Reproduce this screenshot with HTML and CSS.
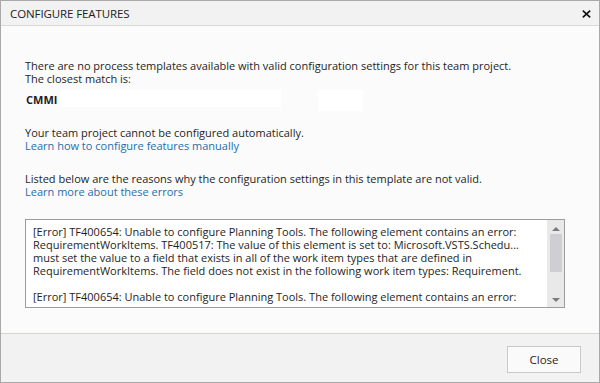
FILE: index.html
```html
<!DOCTYPE html>
<html>
<head>
<meta charset="utf-8">
<link rel="stylesheet" href="styles.css">
</head>
<body>
<div class="dialog">
  <div class="titlebar">
    <span class="title">CONFIGURE FEATURES</span>
    <svg class="close-x" width="9" height="8" viewBox="0 0 9 8"><path d="M0.8 0.6 L8.2 7.4 M8.2 0.6 L0.8 7.4" stroke="#111" stroke-width="1.6" fill="none"/></svg>
  </div>
  <div class="content">
    <p class="para">There are no process templates available with valid configuration settings for this team project.<br>The closest match is:</p>
    <div class="match"><span class="match-name">CMMI</span><span class="blank blank-a"></span><span class="blank blank-b"></span></div>
    <p class="para">Your team project cannot be configured automatically.<br><a class="link">Learn how to configure features manually</a></p>
    <p class="para">Listed below are the reasons why the configuration settings in this template are not valid.<br><a class="link">Learn more about these errors</a></p>
    <div class="errors">
      <div class="errors-text">
        <div class="line">[Error] TF400654: Unable to configure Planning Tools. The following element contains an error:</div>
        <div class="line">RequirementWorkItems. TF400517: The value of this element is set to: Microsoft.VSTS.Schedu...</div>
        <div class="line">must set the value to a field that exists in all of the work item types that are defined in</div>
        <div class="line">RequirementWorkItems. The field does not exist in the following work item types: Requirement.</div>
        <div class="line">&nbsp;</div>
        <div class="line">[Error] TF400654: Unable to configure Planning Tools. The following element contains an error:</div>
      </div>
      <div class="scrollbar">
        <div class="arrow arrow-up"></div>
        <div class="track"><div class="thumb"></div></div>
        <div class="arrow arrow-down"></div>
      </div>
    </div>
  </div>
  <div class="footer">
    <button class="btn">Close</button>
  </div>
</div>
</body>
</html>
```
FILE: styles.css
```css
html, body {
  margin: 0;
  padding: 0;
  background: #ffffff;
}
.dialog {
  width: 600px;
  height: 383px;
  box-sizing: border-box;
  border: 1px solid #a9a9a9;
  display: flex;
  flex-direction: column;
  font-family: "Open Sans", "Noto Sans", sans-serif;
  font-size: 11px;
  color: #1e1e1e;
  background: #fbfbfb;
}
.titlebar {
  height: 24px;
  flex: none;
  background: #f2f2f2;
  border-bottom: 1px solid #d9d9d9;
  display: flex;
  align-items: center;
  justify-content: space-between;
  padding: 0 8px 0 9px;
}
.title {
  font-size: 11.5px;
  color: #222;
  letter-spacing: -0.1px;
}
.close-x {
  display: block;
  margin-top: 1px;
}
.content {
  flex: 1;
  padding: 33px 34px 0 24px;
  display: flex;
  flex-direction: column;
}
.para {
  margin: 0;
  line-height: 13px;
  white-space: nowrap;
}
.para + .para {
  margin-top: 20px;
}
.match {
  display: flex;
  align-items: flex-start;
  margin-top: 8px;
  height: 20px;
  margin-bottom: 0;
}
.match-name {
  font-weight: 700;
  line-height: 13px;
  margin-top: 0;
  padding-left: 1px;
}
.blank {
  background: #ffffff;
  display: block;
}
.blank-a {
  width: 221px;
  height: 17px;
  margin-left: 3px;
  margin-top: -3px;
}
.blank-b {
  width: 45px;
  height: 21px;
  margin-left: 37px;
  margin-top: -3px;
}
.match + .para {
  margin-top: 13px;
}
.link {
  color: #1f6eaa;
  text-decoration: none;
}
.errors {
  margin-top: 21px;
  height: 89px;
  box-sizing: border-box;
  border: 1px solid #9c9c9c;
  background: #ffffff;
  display: flex;
  overflow: hidden;
}
.errors-text {
  flex: 1;
  padding: 5px 0 0 7px;
  line-height: 13px;
  overflow: hidden;
  white-space: nowrap;
}
.scrollbar {
  width: 17px;
  flex: none;
  background: #e9e9e9;
  display: flex;
  flex-direction: column;
  align-items: center;
}
.arrow {
  width: 0;
  height: 0;
  border-left: 4px solid transparent;
  border-right: 4px solid transparent;
}
.arrow-up {
  border-bottom: 4px solid #7a7a7a;
  margin-top: 7px;
}
.arrow-down {
  border-top: 4px solid #7a7a7a;
  margin-bottom: 5px;
}
.track {
  flex: 1;
  width: 100%;
  display: flex;
  justify-content: center;
}
.thumb {
  width: 12px;
  height: 38px;
  margin-top: 3px;
  background: #cfcfd3;
}
.footer {
  height: 48px;
  flex: none;
  background: #f2f2f2;
  border-top: 1px solid #d6d6cc;
  display: flex;
  align-items: center;
  justify-content: flex-end;
  padding-right: 18px;
}
.btn {
  width: 74px;
  height: 27px;
  margin-top: 2px;
  border: 1px solid #c9c9c9;
  background: #fafafa;
  font-family: "Open Sans", "Noto Sans", sans-serif;
  font-size: 11.5px;
  color: #1e1e1e;
  padding: 0;
}
```
